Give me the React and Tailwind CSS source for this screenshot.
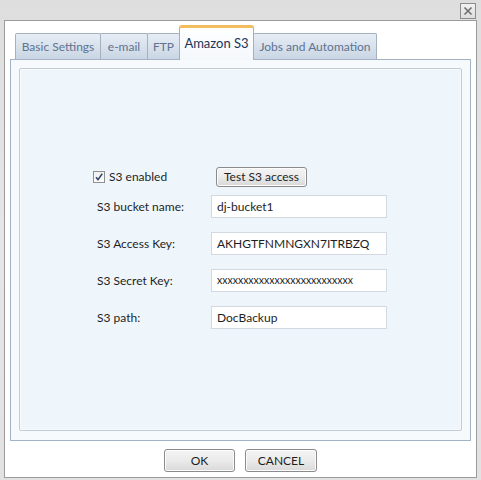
import React from "react";

const tabs = [
  { label: "Basic Settings", w: "w-[86px]" },
  { label: "e-mail", w: "w-[48px]" },
  { label: "FTP", w: "w-[33px]" },
  { label: "Amazon S3", w: "w-[75px]", active: true },
  { label: "Jobs and Automation", w: "w-[124px]" },
];

function Tab({ label, w, active }) {
  if (active) {
    return (
      <div
        className={`${w} h-[35px] -mb-px relative z-10 -ml-px flex items-start justify-center pt-[6px] rounded-t-[3px] border-x border-[#9fb0c2] border-t-[3px] border-t-[#f2bd5f] bg-gradient-to-b from-[#ffffff] to-[#f4f8fc] text-[13px] text-[#1c3458]`}
      >
        {label}
      </div>
    );
  }
  return (
    <div
      className={`${w} h-[26px] -ml-px first:ml-0 flex items-center justify-center rounded-t-[2px] border border-b-0 border-[#a3b1c1] bg-gradient-to-b from-[#e6edf5] to-[#cad6e4] text-[12px] text-[#5d7390]`}
    >
      {label}
    </div>
  );
}

function Field({ label, value, small }) {
  return (
    <div className="flex items-center h-[23px]">
      <div className="w-[118px] pl-[4px] text-[12px] text-[#1e1e1e]">{label}</div>
      <div
        className={`w-[176px] h-[23px] border border-[#d3d9e0] bg-white flex items-center pl-[5px] text-[#1e1e1e] ${small ? "text-[10.5px]" : "text-[12px]"}`}
      >
        {value}
      </div>
    </div>
  );
}

function Btn({ children, w }) {
  return (
    <div
      className={`${w} h-[23px] flex items-center justify-center rounded-[3px] border border-[#8b8b8b] bg-gradient-to-b from-[#f4f4f4] via-[#ebebeb] to-[#d9d9d9] text-[12px] text-[#1e1e1e] shadow-[inset_0_0_0_1px_#fcfcfc]`}
    >
      {children}
    </div>
  );
}

export default function App() {
  return (
    <div
      className="w-[481px] h-[480px] bg-gradient-to-b from-[#dedede] via-[#e6e6e6] to-[#e2e2e2] overflow-hidden"
      style={{ fontFamily: "Lato, 'Open Sans', sans-serif" }}
    >
      <div className="h-[20px] flex justify-end pt-[3px] pr-[5px]">
        <div className="w-[16px] h-[16px] border border-[#8d8d8d] bg-gradient-to-b from-[#f2f2f2] to-[#dcdcdc] flex items-center justify-center">
          <svg width="10" height="10" viewBox="0 0 10 10">
            <path d="M1.5 1.5 L8.5 8.5 M8.5 1.5 L1.5 8.5" stroke="#6e6e6e" strokeWidth="1.6" fill="none" />
          </svg>
        </div>
      </div>
      <div className="ml-[4px] w-[473px] h-[458px] border border-[#9b9b9b] bg-white flex flex-col">
        <div className="h-[38px] flex items-end pl-[10px]">
          {tabs.map((t) => (
            <Tab key={t.label} {...t} />
          ))}
        </div>
        <div className="ml-[5px] w-[461px] h-[382px] border border-[#a3b3c4] bg-[#f6fafd] p-[8px] pb-[9px]">
          <div className="h-full rounded-[2px] border border-[#c3ccd6] bg-[#eef6fc] shadow-[inset_0_0_0_1px_#f8fbfe] pl-[73px] pt-[98px]">
            <div className="flex items-center h-[20px]">
              <div className="w-[123px] flex items-center">
                <div className="w-[12px] h-[12px] border border-[#8e8f8f] bg-gradient-to-b from-[#f0f0f0] to-[#fcfcfc] flex items-center justify-center">
                  <svg width="10" height="10" viewBox="0 0 10 10">
                    <path d="M2 5.2 L4 7.6 L8.2 1.8" stroke="#3b4a66" strokeWidth="1.6" fill="none" />
                  </svg>
                </div>
                <span className="ml-[4px] text-[12px] text-[#1e1e1e]">S3 enabled</span>
              </div>
              <div className="w-[91px] h-[20px] flex items-center justify-center rounded-[3px] border border-[#8b8b8b] bg-gradient-to-b from-[#f4f4f4] via-[#ebebeb] to-[#d7d7d7] text-[12px] text-[#1e1e1e] shadow-[inset_0_0_0_1px_#fcfcfc]">
                Test S3 access
              </div>
            </div>
            <div className="mt-[8px] flex flex-col gap-[14px]">
              <Field label="S3 bucket name:" value="dj-bucket1" />
              <Field label="S3 Access Key:" value="AKHGTFNMNGXN7ITRBZQ" />
              <Field label="S3 Secret Key:" value="xxxxxxxxxxxxxxxxxxxxxxxxxx" small />
              <Field label="S3 path:" value="DocBackup" />
            </div>
          </div>
        </div>
        <div className="flex justify-center gap-[10px] pt-[8px]">
          <Btn w="w-[71px]">OK</Btn>
          <Btn w="w-[72px]">CANCEL</Btn>
        </div>
      </div>
    </div>
  );
}
